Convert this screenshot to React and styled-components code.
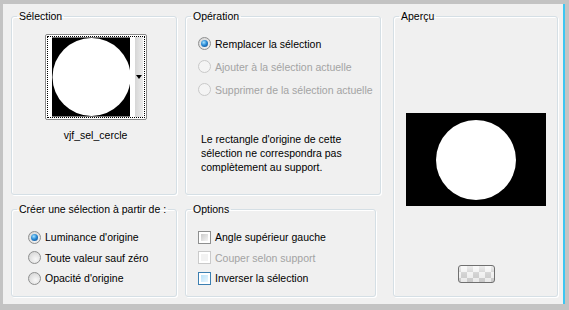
import React from 'react';
import styled, { createGlobalStyle } from 'styled-components';

const GlobalStyle = createGlobalStyle`
	html, body {
		margin: 0;
		padding: 0;
		background: #c3c3c3;
	}
	body {
		font-family: "Liberation Sans", Arial, sans-serif;
		font-size: 10.5px;
		color: #000;
	}
`;

const Window = styled.div`
	box-sizing: border-box;
	width: 562px;
	height: 300px;
	margin: 4px 0 0 3px;
	padding: 5px 5px 7px 8px;
	background: #f0f0f0;
	border-right: 2px solid #3cc6f2;
	display: grid;
	grid-template-columns: 166px 196px 1fr;
	grid-template-rows: 186px 95px;
	column-gap: 8px;
	row-gap: 7px;
`;

const Group = styled.fieldset`
	box-sizing: border-box;
	margin: 0;
	margin-right: ${p => p.$trimRight || 0}px;
	margin-left: ${p => p.$shiftLeft || 0}px;
	padding: 0;
	min-width: 0;
	border: 1px solid #d5dfe5;
	border-radius: 3px;
	box-shadow: 1px 1px 0 #fff, inset 1px 1px 0 #fff;
	grid-column: ${p => p.$col};
	grid-row: ${p => p.$row};
	display: flex;
	flex-direction: column;
`;

const Legend = styled.legend`
	margin-left: 5px;
	padding: 0 2px;
	line-height: 14px;
`;

const SelectionBody = styled.div`
	display: flex;
	flex-direction: column;
	align-items: center;
	padding: 11px 0 0 3px;
	gap: 8px;
`;

const ThumbFrame = styled.div`
	box-sizing: border-box;
	width: 102px;
	height: 86px;
	border: 1px solid #8a8a8a;
	border-radius: 2px;
	padding: 1px;
	background: #fff;
`;

const ThumbInner = styled.div`
	box-sizing: border-box;
	height: 100%;
	border: 1px dotted #000;
	display: flex;
	padding-left: 4px;
	gap: 5px;
`;

const ScrollStrip = styled.div`
	width: 8px;
	background: linear-gradient(to right, #d6d6d6, #ececec);
	display: flex;
	align-items: center;
	justify-content: center;
	margin-right: 1px;
`;

const Caption = styled.div`
	line-height: 14px;
`;

const OptionList = styled.div`
	display: flex;
	flex-direction: column;
	padding: ${p => p.$pad};
`;

const Row = styled.label`
	display: flex;
	align-items: center;
	gap: ${p => p.$gap || 4}px;
	height: ${p => p.$h}px;
	color: ${p => p.$disabled ? '#a3a3a3' : '#000'};
	white-space: nowrap;
`;

const Radio = styled.span`
	box-sizing: border-box;
	width: 13px;
	height: 13px;
	flex: none;
	border-radius: 50%;
	border: 1px solid ${p => p.$disabled ? '#c9c9c9' : '#8e8f8f'};
	background: ${p => p.$disabled
		? '#f4f4f4'
		: 'radial-gradient(circle at 60% 65%, #f8f8f8 0%, #e2e2e2 55%, #cfcfcf 100%)'};
	display: flex;
	align-items: center;
	justify-content: center;
	&::after {
		content: '';
		display: ${p => p.$checked ? 'block' : 'none'};
		width: 7px;
		height: 7px;
		border-radius: 50%;
		background: radial-gradient(circle at 40% 35%, #a8e4ff 0%, #2a8bd6 45%, #0b3f7f 100%);
	}
`;

const Check = styled.span`
	box-sizing: border-box;
	width: 13px;
	height: 13px;
	flex: none;
	border: 1px solid ${p => p.$disabled ? '#cacaca' : p.$hot ? '#3c7fb1' : '#8e8f8f'};
	padding: 2px;
	background: #fff;
	&::after {
		content: '';
		display: block;
		width: 100%;
		height: 100%;
		background: ${p => p.$disabled
			? '#f2f2f2'
			: p.$hot
				? 'linear-gradient(135deg, #b9e2fa, #eaf6fd)'
				: 'linear-gradient(135deg, #cbcbcb, #f4f4f4)'};
	}
`;

const Note = styled.p`
	margin: 31px 0 0 15px;
	line-height: 14px;
`;

const PreviewBody = styled.div`
	display: flex;
	flex-direction: column;
	align-items: center;
	padding: 90px 0 0 1px;
`;

const PreviewButton = styled.button`
	box-sizing: border-box;
	width: 37px;
	height: 18px;
	margin-top: 59px;
	border: 1px solid #707070;
	border-radius: 3px;
	padding: 0;
	background:
		linear-gradient(to bottom, rgba(255,255,255,0.6), rgba(255,255,255,0) 50%, rgba(0,0,0,0.04)),
		repeating-conic-gradient(#d2d2d2 0 25%, #f2f2f2 0 50%) 2px 0 / 12px 12px;
`;

const SelectionThumb = () => (
	<ThumbFrame>
		<ThumbInner>
			<svg width="79" height="80" viewBox="0 0 79 80">
				<rect width="79" height="80" fill="#000" />
				<circle cx="40" cy="40" r="39.5" fill="#fff" />
			</svg>
			<ScrollStrip>
				<svg width="6" height="4" viewBox="0 0 6 4">
					<path d="M0 0 H6 L3 4 Z" fill="#000" />
				</svg>
			</ScrollStrip>
		</ThumbInner>
	</ThumbFrame>
);

const OPERATIONS = [
	{ label: 'Remplacer la sélection', checked: true },
	{ label: 'Ajouter à la sélection actuelle', disabled: true },
	{ label: 'Supprimer de la sélection actuelle', disabled: true },
];

const SOURCES = [
	{ label: "Luminance d'origine", checked: true },
	{ label: 'Toute valeur sauf zéro' },
	{ label: "Opacité d'origine" },
];

const OPTIONS = [
	{ label: 'Angle supérieur gauche' },
	{ label: 'Couper selon support', disabled: true },
	{ label: 'Inverser la sélection', hot: true },
];

const App = () => (
	<>
		<GlobalStyle />
		<Window>
			<Group $col={1} $row={1}>
				<Legend>Sélection</Legend>
				<SelectionBody>
					<SelectionThumb />
					<Caption>vjf_sel_cercle</Caption>
				</SelectionBody>
			</Group>

			<Group $col={2} $row={1}>
				<Legend>Opération</Legend>
				<OptionList $pad="9px 0 0 12px">
					{OPERATIONS.map((o, i) => (
						<Row key={i} $h={23} $gap={4} $disabled={o.disabled}>
							<Radio $checked={o.checked} $disabled={o.disabled} />
							{o.label}
						</Row>
					))}
				</OptionList>
				<Note>
					Le rectangle d'origine de cette<br />
					sélection ne correspondra pas<br />
					complètement au support.
				</Note>
			</Group>

			<Group $col={3} $row="1 / span 2" $shiftLeft={4}>
				<Legend>Aperçu</Legend>
				<PreviewBody>
					<svg width="140" height="93" viewBox="0 0 140 93">
						<rect width="140" height="93" fill="#000" />
						<circle cx="70" cy="47" r="40" fill="#fff" />
					</svg>
					<PreviewButton />
				</PreviewBody>
			</Group>

			<Group $col={1} $row={2}>
				<Legend>Créer une sélection à partir de :</Legend>
				<OptionList $pad="11px 0 0 16px">
					{SOURCES.map((o, i) => (
						<Row key={i} $h={20.5} $gap={4}>
							<Radio $checked={o.checked} />
							{o.label}
						</Row>
					))}
				</OptionList>
			</Group>

			<Group $col={2} $row={2} $trimRight={5}>
				<Legend>Options</Legend>
				<OptionList $pad="11px 0 0 12px">
					{OPTIONS.map((o, i) => (
						<Row key={i} $h={20.5} $gap={4} $disabled={o.disabled}>
							<Check $disabled={o.disabled} $hot={o.hot} />
							{o.label}
						</Row>
					))}
				</OptionList>
			</Group>
		</Window>
	</>
);

export default App;
